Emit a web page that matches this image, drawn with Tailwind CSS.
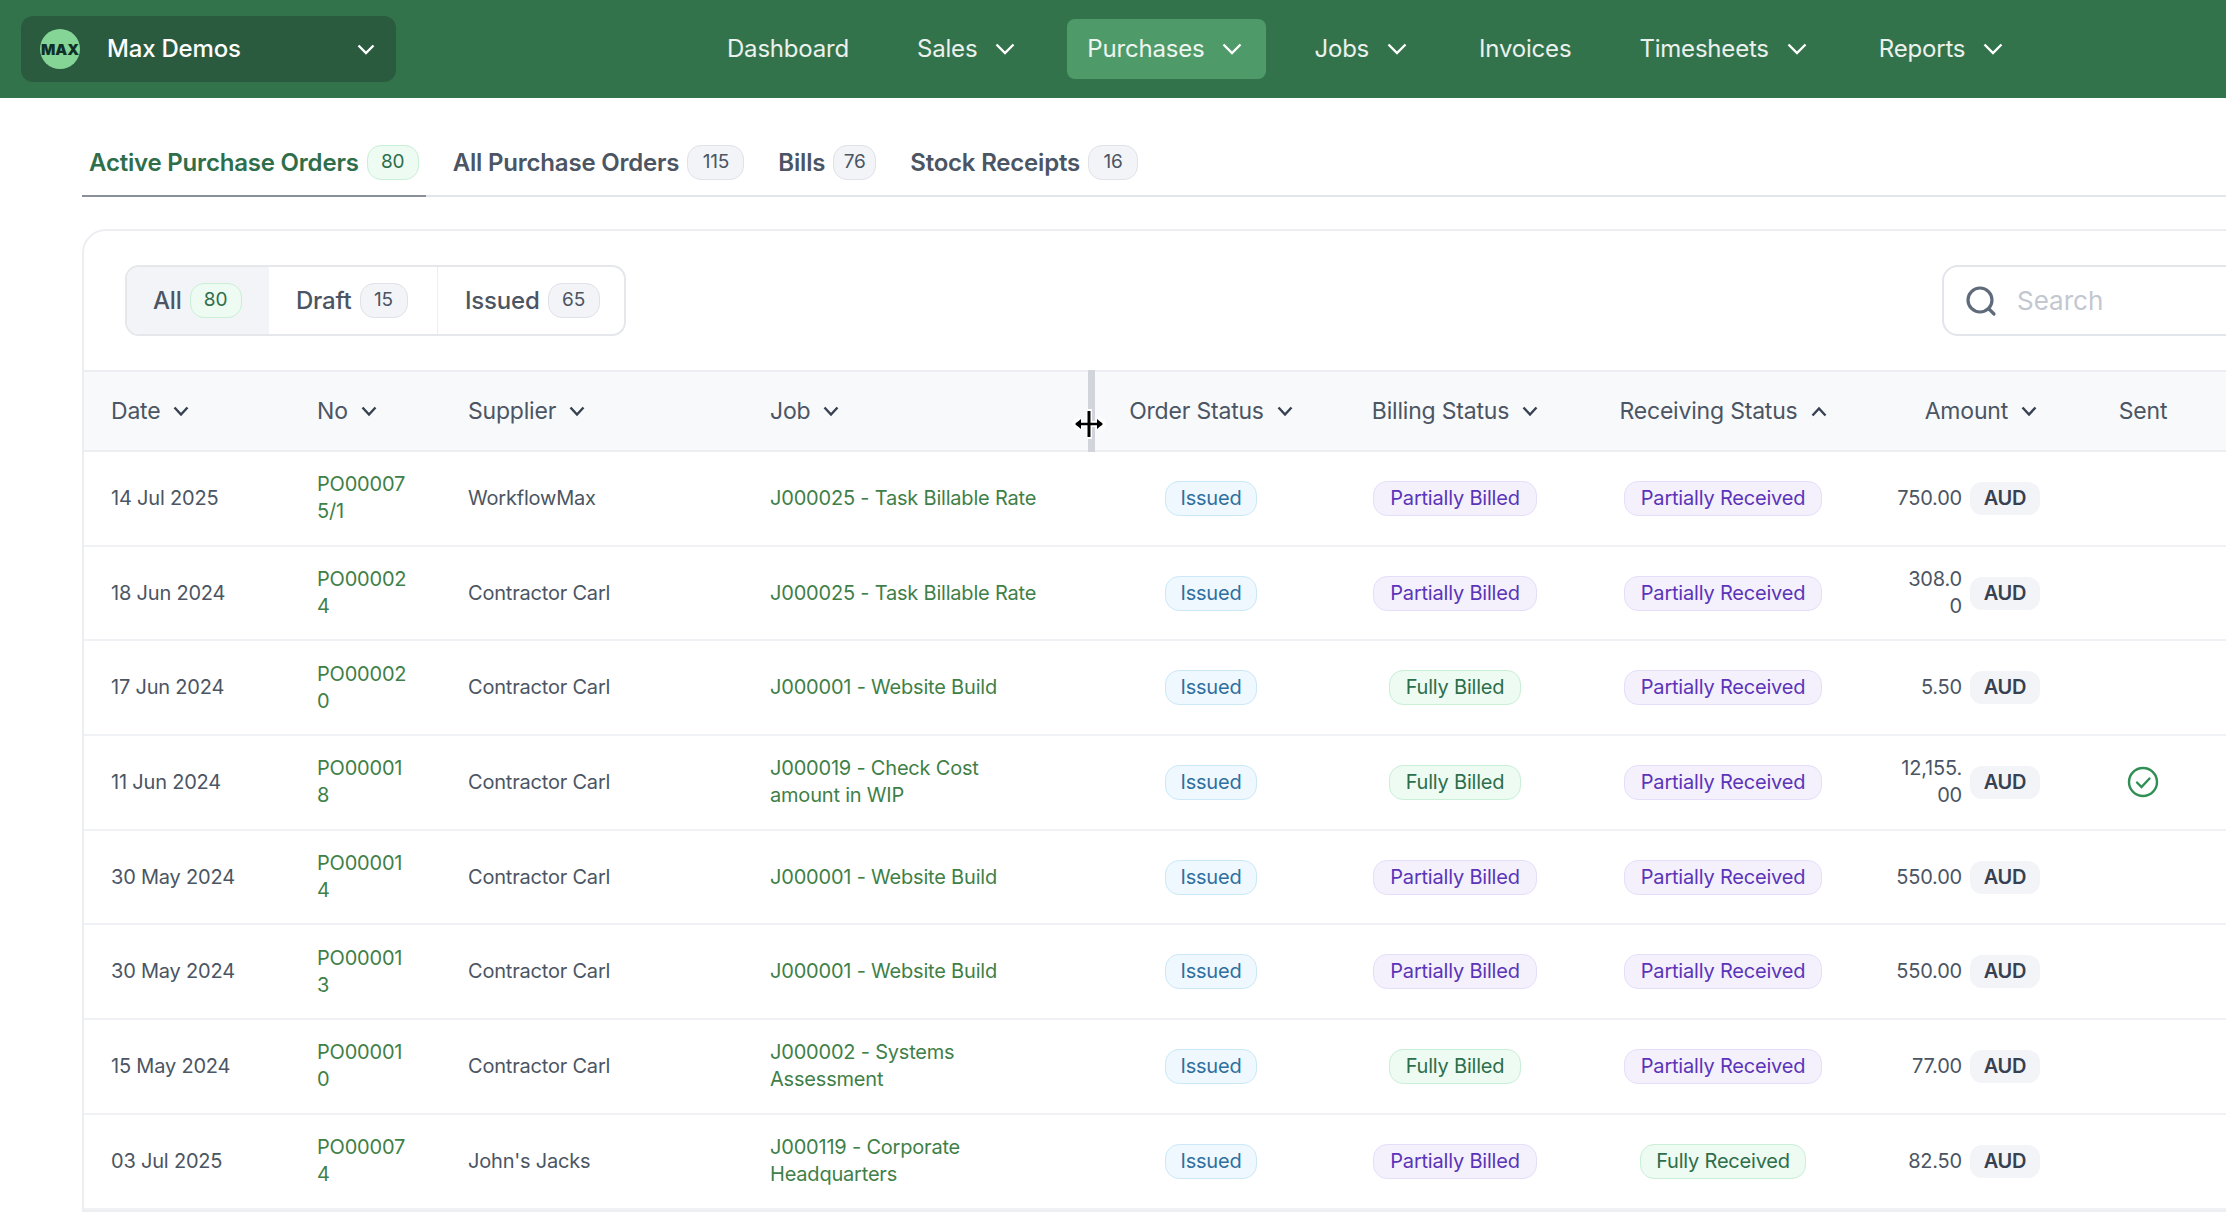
<!DOCTYPE html>
<html lang="en">
<head>
    <meta charset="UTF-8">
    <title>Purchase Orders</title>
    <script src="https://cdn.jsdelivr.net/npm/@tailwindcss/browser@4"></script>
</head>
<body class="bg-white h-[1218px] w-[2226px] overflow-hidden font-[Inter,sans-serif] text-[#4b5563]">
    <!-- Top nav -->
    <header class="h-[98px] bg-[#33734b] flex items-center pl-[21px]">
        <div class="w-[375px] h-[66px] rounded-xl bg-[#2a5b3f] flex items-center pl-[19px] pr-[21px]">
            <div class="w-10 h-10 rounded-full bg-[#85d596] overflow-hidden flex items-center justify-center text-[15px] leading-none font-black text-[#10312a]">MAX</div>
            <span class="ml-[27px] text-[24px] font-medium text-white tracking-[-0.2px]">Max Demos</span>
            <svg class="ml-auto" width="18" height="11" viewBox="0 0 18 11" fill="none" stroke="#fff" stroke-width="2.4"><path d="M1.5 1.5 9 9l7.5-7.5"/></svg>
        </div>
        <nav class="ml-[311px] flex items-center gap-7 text-[24px] text-white/90 tracking-[-0.2px]">
            <a class="h-[60px] px-5 flex items-center">Dashboard</a>
            <a class="h-[60px] pl-5 pr-6 flex items-center">Sales<svg class="ml-[18px]" width="20" height="12" viewBox="0 0 20 12" fill="none" stroke="#fff" stroke-width="2.4"><path d="M1.5 1.5 10 10l8.5-8.5"/></svg></a>
            <a class="h-[60px] pl-5 pr-6 flex items-center rounded-lg bg-[#4f9a69]">Purchases<svg class="ml-[18px]" width="20" height="12" viewBox="0 0 20 12" fill="none" stroke="#fff" stroke-width="2.4"><path d="M1.5 1.5 10 10l8.5-8.5"/></svg></a>
            <a class="h-[60px] pl-5 pr-6 flex items-center">Jobs<svg class="ml-[18px]" width="20" height="12" viewBox="0 0 20 12" fill="none" stroke="#fff" stroke-width="2.4"><path d="M1.5 1.5 10 10l8.5-8.5"/></svg></a>
            <a class="h-[60px] px-5 flex items-center">Invoices</a>
            <a class="h-[60px] pl-5 pr-6 flex items-center">Timesheets<svg class="ml-[18px]" width="20" height="12" viewBox="0 0 20 12" fill="none" stroke="#fff" stroke-width="2.4"><path d="M1.5 1.5 10 10l8.5-8.5"/></svg></a>
            <a class="h-[60px] pl-5 pr-6 flex items-center">Reports<svg class="ml-[18px]" width="20" height="12" viewBox="0 0 20 12" fill="none" stroke="#fff" stroke-width="2.4"><path d="M1.5 1.5 10 10l8.5-8.5"/></svg></a>
        </nav>
    </header>

    <main class="pl-[82px]">
        <!-- Tabs -->
        <div class="h-[99px] pt-[47px] flex items-start gap-5 border-b-2 border-[#e2e5ea] text-[24px] font-semibold tracking-[-0.2px]">
            <div class="h-[52px] -mb-[2px] px-[7px] flex items-start gap-2 border-b-2 border-[#8a9099] text-[#2e6e4b]">Active Purchase Orders<span class="h-[35px] w-[52px] rounded-[14px] border border-[#c9efd7] bg-[#edfbf2] flex items-center justify-center text-[19px] font-normal">80</span></div>
            <div class="px-[7px] flex items-start gap-2">All Purchase Orders<span class="h-[35px] w-[57px] rounded-[14px] border border-[#dfe2e8] bg-[#f3f4f8] flex items-center justify-center text-[19px] font-normal">115</span></div>
            <div class="px-[7px] flex items-start gap-2">Bills<span class="h-[35px] w-[43px] rounded-[14px] border border-[#dfe2e8] bg-[#f3f4f8] flex items-center justify-center text-[19px] font-normal">76</span></div>
            <div class="px-[7px] flex items-start gap-2">Stock Receipts<span class="h-[35px] w-[50px] rounded-[14px] border border-[#dfe2e8] bg-[#f3f4f8] flex items-center justify-center text-[19px] font-normal">16</span></div>
        </div>

        <!-- Card -->
        <div class="relative mt-[32px] w-[2260px] border-2 border-[#eceef1] rounded-tl-[24px]">
            <div class="h-[139px] flex items-start justify-between pt-[34px] pl-[41px]">
                <div class="h-[71px] w-[501px] flex rounded-[14px] border-2 border-[#e5e7eb] overflow-hidden text-[24px] font-medium tracking-[-0.2px]">
                    <div class="w-[142px] pl-[26px] flex items-center gap-2 bg-[#f3f4f8]">All<span class="h-[35px] w-[52px] rounded-[14px] border border-[#c9efd7] bg-[#edfbf2] text-[#2e6e4b] flex items-center justify-center text-[19px] font-normal">80</span></div>
                    <div class="w-[169px] pl-[27px] flex items-center gap-2 border-r border-[#eceef1]">Draft<span class="h-[35px] w-[48px] rounded-[14px] border border-[#dfe2e8] bg-[#f3f4f8] flex items-center justify-center text-[19px] font-normal">15</span></div>
                    <div class="pl-[27px] flex items-center gap-2">Issued<span class="h-[35px] w-[52px] rounded-[14px] border border-[#dfe2e8] bg-[#f3f4f8] flex items-center justify-center text-[19px] font-normal">65</span></div>
                </div>
                <div class="h-[71px] w-[400px] mr-[-2px] flex items-center pl-[21px] rounded-l-[16px] border-2 border-[#e2e5ea]">
                    <svg width="32" height="32" viewBox="0 0 32 32" fill="none" stroke="#5f6b7a" stroke-width="3.2" stroke-linecap="round"><circle cx="15" cy="15" r="12"/><path d="m24 24 5 5"/></svg>
                    <span class="ml-[20px] text-[26px] text-[#c3c7d0]">Search</span>
                </div>
            </div>

            <!-- Header row -->
            <div class="h-[82px] grid grid-cols-[205px_151px_302px_354px_230px_258px_278px_207px_148px] items-center bg-[#f8f9fb] border-y-2 border-[#eceef1] text-[23px] tracking-[-0.2px]">
                <div class="pl-[27px] flex items-center gap-[13px]">Date<svg width="16" height="11" viewBox="0 0 16 11" fill="none" stroke="#374151" stroke-width="2.4"><path d="M1.5 1.5 8 8.500l6.500-7"/></svg></div>
                <div class="pl-[28px] flex items-center gap-[13px]">No<svg width="16" height="11" viewBox="0 0 16 11" fill="none" stroke="#374151" stroke-width="2.4"><path d="M1.5 1.5 8 8.500l6.500-7"/></svg></div>
                <div class="pl-[28px] flex items-center gap-[13px]">Supplier<svg width="16" height="11" viewBox="0 0 16 11" fill="none" stroke="#374151" stroke-width="2.4"><path d="M1.5 1.5 8 8.500l6.500-7"/></svg></div>
                <div class="pl-[28px] flex items-center gap-[13px]">Job<svg width="16" height="11" viewBox="0 0 16 11" fill="none" stroke="#374151" stroke-width="2.4"><path d="M1.5 1.5 8 8.500l6.500-7"/></svg></div>
                <div class="flex items-center justify-center gap-[13px]">Order Status<svg width="16" height="11" viewBox="0 0 16 11" fill="none" stroke="#374151" stroke-width="2.4"><path d="M1.5 1.5 8 8.500l6.500-7"/></svg></div>
                <div class="flex items-center justify-center gap-[13px]">Billing Status<svg width="16" height="11" viewBox="0 0 16 11" fill="none" stroke="#374151" stroke-width="2.4"><path d="M1.5 1.5 8 8.500l6.500-7"/></svg></div>
                <div class="flex items-center justify-center gap-[13px]">Receiving Status<svg width="16" height="11" viewBox="0 0 16 11" fill="none" stroke="#374151" stroke-width="2.4"><path d="M1.5 9.500 8 2.500l6.500 7"/></svg></div>
                <div class="flex items-center justify-end gap-[13px] pr-[32px]">Amount<svg width="16" height="11" viewBox="0 0 16 11" fill="none" stroke="#374151" stroke-width="2.4"><path d="M1.5 1.5 8 8.500l6.500-7"/></svg></div>
                <div class="text-center">Sent</div>
            </div>

            <!-- Rows get rendered here -->
            <div id="rows"></div>

            <!-- Column resize handle and cursor -->
            <div class="absolute left-[1004px] top-[139px] w-[7px] h-[82px] bg-[#d1d5db]"></div>
            <svg class="absolute left-[988px] top-[177px]" width="34" height="32" viewBox="0 0 34 32">
                <path d="M17 1v30M3 16h28M8 10l-6 6 6 6M26 10l6 6-6 6" fill="none" stroke="#fff" stroke-width="6" stroke-linejoin="round"/>
                <path d="M17 3v26" stroke="#000" stroke-width="3"/>
                <path d="M4 16h26" stroke="#000" stroke-width="2.500"/>
                <path d="M9 11l-6 5 6 5zM25 11l6 5-6 5z" fill="#000"/>
            </svg>
        </div>
    </main>

    <script>
        const badges = {
            'Issued': 'w-[92px] text-[#2f6f9f] bg-[#eff8fe] border-[#cbe8f8]',
            'Partially Billed': 'w-[164px] text-[#5b34b8] bg-[#f4f1fd] border-[#e4defa]',
            'Fully Billed': 'w-[132px] text-[#2e6e4b] bg-[#edfbf2] border-[#c9efd7]',
            'Partially Received': 'w-[198px] text-[#5b34b8] bg-[#f4f1fd] border-[#e4defa]',
            'Fully Received': 'w-[166px] text-[#2e6e4b] bg-[#edfbf2] border-[#c9efd7]'
        };

        const orders = [
            ['14 Jul 2025', 'PO000075/1', 'WorkflowMax', 'J000025 - Task Billable Rate', 'Partially Billed', 'Partially Received', '750.00', false],
            ['18 Jun 2024', 'PO000024', 'Contractor Carl', 'J000025 - Task Billable Rate', 'Partially Billed', 'Partially Received', '308.00', false],
            ['17 Jun 2024', 'PO000020', 'Contractor Carl', 'J000001 - Website Build', 'Fully Billed', 'Partially Received', '5.50', false],
            ['11 Jun 2024', 'PO000018', 'Contractor Carl', 'J000019 - Check Cost amount in WIP', 'Fully Billed', 'Partially Received', '12,155.00', true],
            ['30 May 2024', 'PO000014', 'Contractor Carl', 'J000001 - Website Build', 'Partially Billed', 'Partially Received', '550.00', false],
            ['30 May 2024', 'PO000013', 'Contractor Carl', 'J000001 - Website Build', 'Partially Billed', 'Partially Received', '550.00', false],
            ['15 May 2024', 'PO000010', 'Contractor Carl', 'J000002 - Systems Assessment', 'Fully Billed', 'Partially Received', '77.00', false],
            ['03 Jul 2025', 'PO000074', "John's Jacks", 'J000119 - Corporate Headquarters', 'Partially Billed', 'Fully Received', '82.50', false]
        ];

        function badge(label) {
            return `<span class="h-[35px] ${badges[label]} rounded-[14px] border flex items-center justify-center">${label}</span>`;
        }

        document.getElementById('rows').innerHTML = orders.map((o) => `
            <div class="h-[94.7px] grid grid-cols-[205px_151px_302px_354px_230px_258px_278px_207px_148px] items-center border-b-2 border-[#f0f1f4] text-[20px] leading-[27px] tracking-[-0.2px]">
                <div class="pl-[27px]">${o[0]}</div>
                <div class="pl-[28px] pr-[32px] text-[#3f7f48] break-all">${o[1]}</div>
                <div class="pl-[28px]">${o[2]}</div>
                <div class="pl-[28px] pr-[58px] text-[#3f7f48]">${o[3]}</div>
                <div class="flex justify-center">${badge('Issued')}</div>
                <div class="flex justify-center">${badge(o[4])}</div>
                <div class="flex justify-center">${badge(o[5])}</div>
                <div class="flex items-center justify-end gap-2 pr-[29px]">
                    <span class="w-[66px] text-right break-all">${o[6]}</span>
                    <span class="h-[33px] w-[70px] rounded-[12px] bg-[#f3f4f8] flex items-center justify-center font-semibold text-[#374151]">AUD</span>
                </div>
                <div class="flex justify-center">
                    ${o[7] ? '<svg width="32" height="32" viewBox="0 0 32 32" fill="none" stroke="#2f8f55" stroke-width="2.400"><circle cx="16" cy="16" r="14"/><path d="m10 16.500 4.500 4.500L22.500 12.500" stroke-linecap="round"/></svg>' : ''}
                </div>
            </div>`).join('');
    </script>
</body>
</html>
